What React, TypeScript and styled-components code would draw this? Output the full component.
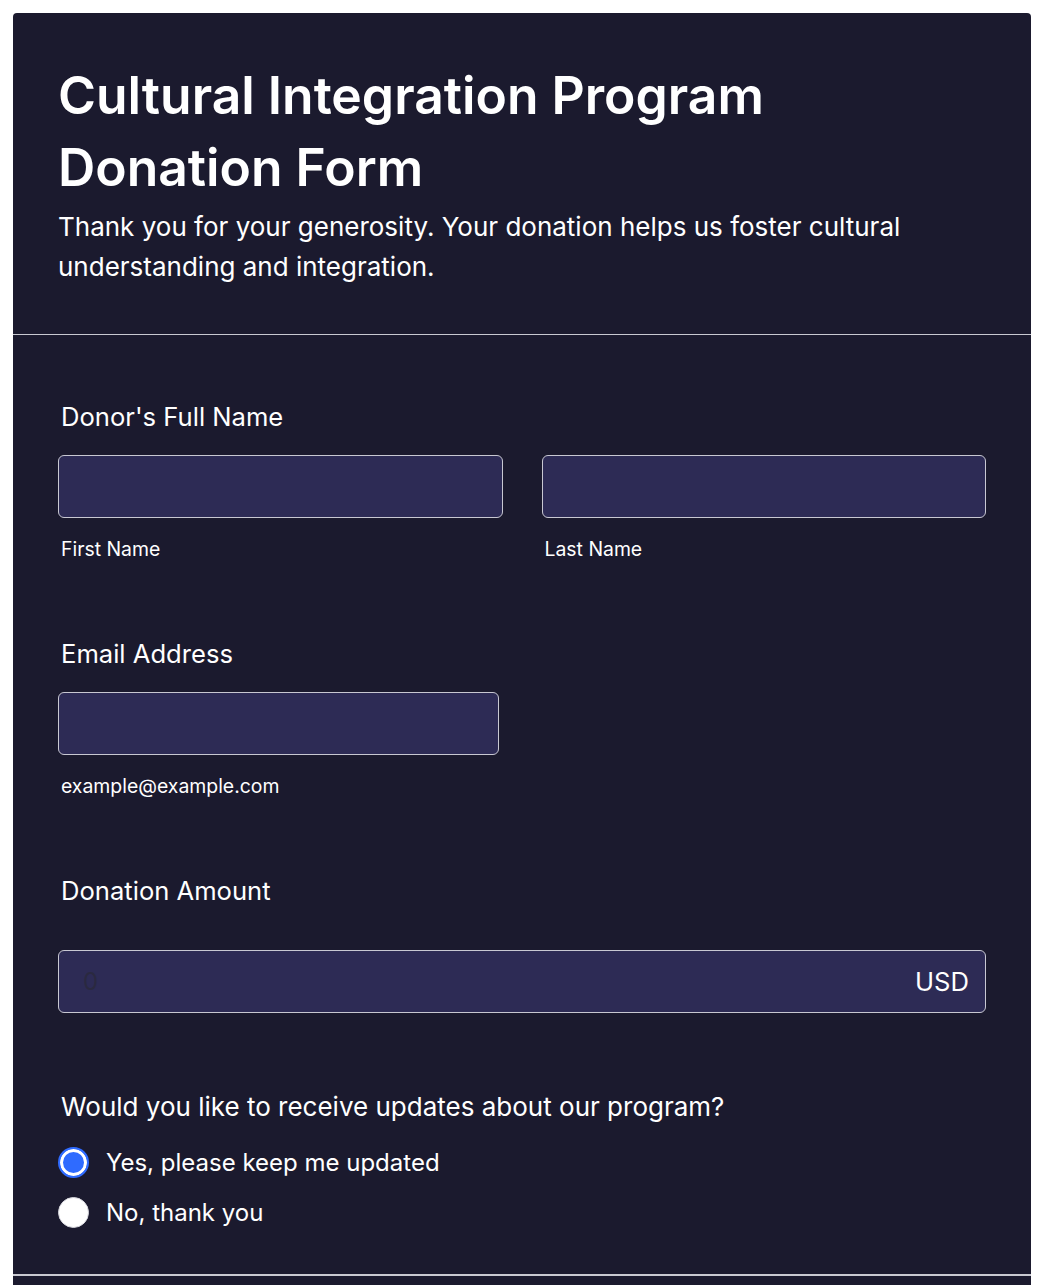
import styled, { createGlobalStyle } from "styled-components";

const GlobalStyle = createGlobalStyle`
  body {
    margin: 0;
    padding: 13px;
    background: #ffffff;
    font-family: Inter, "Noto Sans", sans-serif;
  }
`;

const Card = styled.div`
  background-color: #1b1a2e;
  border-radius: 4px;
  color: #ffffff;
  overflow: hidden;
`;

const Header = styled.header`
  padding: 46px 45px 47px 45px;
  border-bottom: 1px solid #c9c9d1;
`;

const Title = styled.h1`
  margin: 0;
  max-width: 860px;
  font-size: 51.6px;
  line-height: 72px;
  font-weight: 600;
`;

const Subtitle = styled.p`
  margin: 4px 0 0 0;
  font-size: 26px;
  line-height: 40px;
  font-weight: 400;
`;

const Form = styled.form`
  display: flex;
  flex-direction: column;
  gap: 73px;
  padding: 64px 45px 42px 45px;
`;

const Field = styled.div<{ $offset?: number }>`
  display: flex;
  flex-direction: column;
  margin-top: ${(p) => p.$offset ?? 0}px;
`;

const Label = styled.label<{ $space?: number }>`
  font-size: 25.6px;
  line-height: 36px;
  padding-left: 3px;
  margin-bottom: ${(p) => p.$space ?? 20}px;
`;

const Columns = styled.div`
  display: grid;
  grid-template-columns: 1fr 1fr;
  column-gap: 39px;
`;

const Col = styled.div`
  display: flex;
  flex-direction: column;
`;

const Input = styled.input<{ $width?: number }>`
  box-sizing: border-box;
  height: 63px;
  width: ${(p) => (p.$width ? `${p.$width}px` : "100%")};
  background-color: #2d2b55;
  border: 1px solid #c8c8d2;
  border-radius: 6px;
  padding: 0 24px;
  font-family: inherit;
  font-size: 24px;
  color: #ffffff;
  outline: none;

  &::placeholder {
    color: #2a2940;
  }
`;

const SubLabel = styled.span`
  margin-top: 17px;
  padding-left: 3px;
  font-size: 19.4px;
  line-height: 28px;
`;

const AmountBox = styled.div`
  position: relative;
  display: flex;
  align-items: center;
`;

const Currency = styled.span`
  position: absolute;
  right: 17px;
  font-size: 25.6px;
  line-height: 30px;
`;

const Question = styled.div`
  font-size: 26px;
  line-height: 38px;
  padding-left: 3px;
  margin-bottom: 16px;
`;

const Options = styled.div`
  display: flex;
  flex-direction: column;
  gap: 10px;
`;

const Option = styled.label`
  display: flex;
  align-items: center;
  gap: 17px;
  height: 40px;
  font-size: 24px;
`;

const Radio = styled.input`
  appearance: none;
  margin: 0;
  width: 31px;
  height: 31px;
  border-radius: 50%;
  background: #ffffff;
  border: 1px solid #d6d6dd;
  box-sizing: border-box;

  &:checked {
    background: #2f6bff;
    border: 2px solid #2f6bff;
    box-shadow: inset 0 0 0 3px #ffffff;
  }
`;

const NextSection = styled.div`
  height: 40px;
  border-top: 2px solid #c9c9d1;
`;

export default function App() {
  return (
    <>
      <GlobalStyle />
      <Card>
        <Header>
          <Title>Cultural Integration Program Donation Form</Title>
          <Subtitle>
            Thank you for your generosity. Your donation helps us foster cultural
            understanding and integration.
          </Subtitle>
        </Header>
        <Form onSubmit={(e) => e.preventDefault()}>
          <Field>
            <Label>Donor's Full Name</Label>
            <Columns>
              <Col>
                <Input type="text" />
                <SubLabel>First Name</SubLabel>
              </Col>
              <Col>
                <Input type="text" />
                <SubLabel>Last Name</SubLabel>
              </Col>
            </Columns>
          </Field>
          <Field>
            <Label>Email Address</Label>
            <Columns>
              <Col>
                <Input type="email" $width={441} />
                <SubLabel>example@example.com</SubLabel>
              </Col>
            </Columns>
          </Field>
          <Field>
            <Label $space={41}>Donation Amount</Label>
            <AmountBox>
              <Input type="text" placeholder="0" />
              <Currency>USD</Currency>
            </AmountBox>
          </Field>
          <Field $offset={2}>
            <Question>Would you like to receive updates about our program?</Question>
            <Options>
              <Option>
                <Radio type="radio" name="updates" defaultChecked />
                Yes, please keep me updated
              </Option>
              <Option>
                <Radio type="radio" name="updates" />
                No, thank you
              </Option>
            </Options>
          </Field>
        </Form>
        <NextSection />
      </Card>
    </>
  );
}
